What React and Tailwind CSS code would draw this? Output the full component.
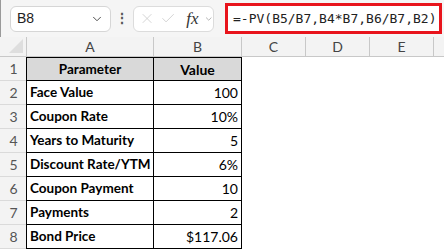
import { ChevronDown, X, Check } from 'lucide-react'

const rows = [
  ['Parameter', 'Value', true],
  ['Face Value', '100'],
  ['Coupon Rate', '10%'],
  ['Years to Maturity', '5'],
  ['Discount Rate/YTM', '6%'],
  ['Coupon Payment', '10'],
  ['Payments', '2'],
  ['Bond Price', '$117.06'],
]

const cols = ['A', 'B', 'C', 'D', 'E']

export default function App() {
  return (
    <div className="w-[444px] h-[249px] overflow-hidden bg-white font-['Lato',sans-serif] relative">
      {/* formula bar */}
      <div className="h-[37px] bg-[#f5f5f5] flex items-center border-l border-[#9a9a9a] font-['Liberation_Sans',sans-serif]">
        <div className="ml-[9px] w-[101px] h-[26px] bg-white border border-[#d6d6d6] rounded-[6px] flex items-center justify-between pl-[6px] pr-[6px]">
          <span className="text-[14px] text-[#222]">B8</span>
          <ChevronDown className="w-[14px] h-[14px] text-[#444]" strokeWidth={1.6} />
        </div>
        <div className="w-[22px] flex justify-center text-[#555] text-[14px] font-bold">⋮</div>
        <div className="w-[81px] h-[26px] bg-white border border-[#dcdcdc] rounded-[6px] flex items-center pl-[5px] gap-[5px]">
          <X className="w-[17px] h-[17px] text-[#c4c4c4]" strokeWidth={1.1} />
          <Check className="w-[17px] h-[17px] text-[#c4c4c4]" strokeWidth={1.1} />
          <span className="ml-[5px] font-['Liberation_Serif',serif] italic text-[17px] text-[#333] leading-none">fx</span>
          <ChevronDown className="w-[10px] h-[10px] text-[#888]" strokeWidth={1.6} />
        </div>
        <div className="ml-[11px] w-[217px] h-[31px] bg-white border-[3px] border-[#e8141c] flex items-center pl-[5px]">
          <span className="font-['DejaVu_Sans_Mono',monospace] text-[13px] text-[#222] whitespace-nowrap">=-PV(B5/B7,B4*B7,B6/B7,B2)</span>
        </div>
      </div>

      {/* grid */}
      <div className="grid grid-cols-[27px_127px_88px_64px_64px_64px_1fr] grid-rows-[20px_repeat(8,24px)]">
        <div className="bg-[#f3f3f3] border-b border-r border-[#c8c8c8] relative">
          <div className="absolute right-[3px] bottom-[3px] w-0 h-0 border-l-[14px] border-l-transparent border-b-[14px] border-b-[#dedede]" />
        </div>
        {cols.map((c) => (
          <div key={c} className="bg-[#f3f3f3] border-b border-r border-[#c8c8c8] flex items-center justify-center text-[14px] text-[#444]">
            {c}
          </div>
        ))}
        <div className="bg-[#f3f3f3] border-b border-[#c8c8c8]" />

        {rows.map(([label, value, head], i) => (
          <div key={i} className="contents">
            <div className="bg-[#f3f3f3] border-b border-[#dadada] flex items-center justify-center text-[14px] text-[#555]">
              {i + 1}
            </div>
            <div
              className={`border border-black -ml-px ${i > 0 ? '-mt-px' : ''} flex items-center whitespace-nowrap text-[13.5px] font-bold text-black ${head ? 'bg-[#d9d9d9] justify-center' : 'pl-[3px]'}`}
            >
              {label}
            </div>
            <div
              className={`border border-black -ml-px ${i > 0 ? '-mt-px' : ''} flex items-center whitespace-nowrap text-[14px] text-black ${head ? 'bg-[#d9d9d9] justify-center font-bold' : 'justify-end pr-[3px]'}`}
            >
              {value}
            </div>
            <div />
            <div />
            <div />
            <div />
          </div>
        ))}
      </div>
    </div>
  )
}
